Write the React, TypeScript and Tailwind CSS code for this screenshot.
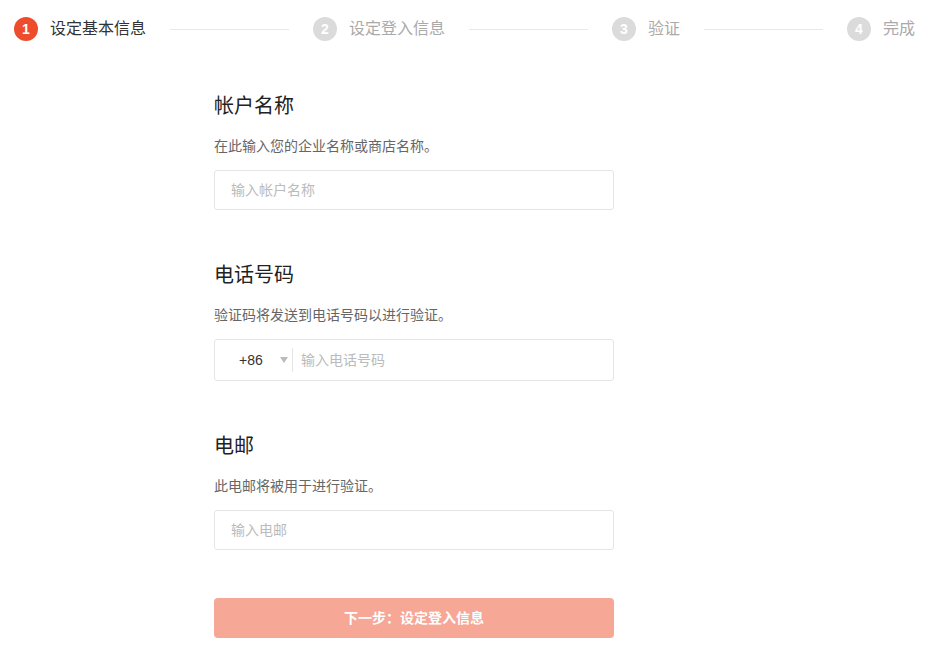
import React from 'react';

const font = { fontFamily: '"Liberation Sans", "Noto Sans CJK SC", sans-serif' };

const steps = ['设定基本信息', '设定登入信息', '验证', '完成'];

function Stepper() {
  return (
    <div className="flex h-[58px] items-center pl-[14px] pr-[28px]">
      {steps.map((label, i) => (
        <React.Fragment key={label}>
          {i > 0 && <div className="mx-6 h-px flex-1 bg-[#e8e8e8]" />}
          <div className="flex items-center">
            <div
              className={`flex h-6 w-6 items-center justify-center rounded-full text-[14px] font-bold text-white ${
                i === 0 ? 'bg-[#ee4d2d]' : 'bg-[#dbdbdb]'
              }`}
            >
              {i + 1}
            </div>
            <span className={`ml-3 text-[16px] leading-6 ${i === 0 ? 'text-[#333]' : 'text-[#aaa]'}`}>{label}</span>
          </div>
        </React.Fragment>
      ))}
    </div>
  );
}

function Field({ title, desc, gap, children }: { title: string; desc: string; gap: string; children: React.ReactNode }) {
  return (
    <div className={gap}>
      <div className="text-[20px] leading-[28px] text-[#222]">{title}</div>
      <div className="mt-4 text-[14px] leading-5 text-[#666]">{desc}</div>
      <div className="mt-[14px]">{children}</div>
    </div>
  );
}

export default function App() {
  return (
    <div className="min-h-screen bg-white" style={font}>
      <Stepper />
      <div className="ml-[214px] mt-[34px] w-[400px]">
        <Field title="帐户名称" desc="在此输入您的企业名称或商店名称。" gap="mb-[51px]">
          <input
            className="h-10 w-full rounded-[3px] border border-[#e5e5e5] px-4 text-[14px] text-[#333] outline-none placeholder:text-[#bbb]"
            placeholder="输入帐户名称"
          />
        </Field>
        <Field title="电话号码" desc="验证码将发送到电话号码以进行验证。" gap="mb-[51px]">
          <div className="flex h-[42px] w-full items-center rounded-[3px] border border-[#e5e5e5]">
            <div className="flex w-[77px] items-center pl-6 pr-[4px]">
              <span className="text-[14px] text-[#333]">+86</span>
              <svg className="ml-auto" width="8" height="6" viewBox="0 0 8 6">
                <path d="M0 0 L8 0 L4 6 Z" fill="#bbb" />
              </svg>
            </div>
            <div className="h-6 w-px bg-[#e5e5e5]" />
            <input
              className="h-full flex-1 bg-transparent pl-2 text-[14px] text-[#333] outline-none placeholder:text-[#bbb]"
              placeholder="输入电话号码"
            />
          </div>
        </Field>
        <Field title="电邮" desc="此电邮将被用于进行验证。" gap="mb-[48px]">
          <input
            className="h-10 w-full rounded-[3px] border border-[#e5e5e5] px-4 text-[14px] text-[#333] outline-none placeholder:text-[#bbb]"
            placeholder="输入电邮"
          />
        </Field>
        <button className="h-10 w-full rounded-[4px] bg-[#f6a796] text-[14px] font-bold text-white">
          下一步：设定登入信息
        </button>
      </div>
    </div>
  );
}
